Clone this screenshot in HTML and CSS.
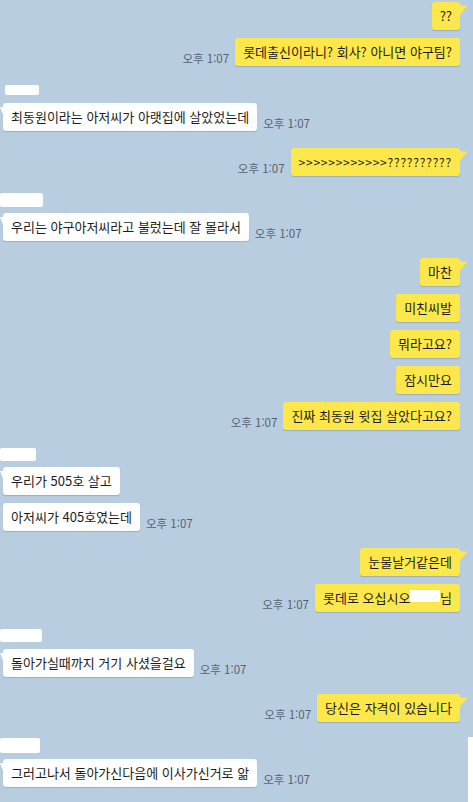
FILE: index.html
```html
<!DOCTYPE html>
<html lang="ko">
<head>
<meta charset="utf-8">
<link rel="stylesheet" href="styles.css">
</head>
<body>
<div class="chat">
  <div class="row me">
    <div class="bubble y tail">??</div>
  </div>
  <div class="row me same">
    <span class="time">오후 1:07</span>
    <div class="bubble y">롯데출신이라니? 회사? 아니면 야구팀?</div>
  </div>

  <div class="name"><span class="blob b1"></span></div>
  <div class="row other">
    <div class="bubble w tail">최동원이라는 아저씨가 아랫집에 살았었는데</div>
    <span class="time">오후 1:07</span>
  </div>

  <div class="row me switch">
    <span class="time">오후 1:07</span>
    <div class="bubble y tail arrows">&gt;&gt;&gt;&gt;&gt;&gt;&gt;&gt;&gt;&gt;&gt;&gt;??????????</div>
  </div>

  <div class="name"><span class="blob b2"></span></div>
  <div class="row other">
    <div class="bubble w tail">우리는 야구아저씨라고 불렀는데 잘 몰라서</div>
    <span class="time">오후 1:07</span>
  </div>

  <div class="row me switch">
    <div class="bubble y tail">마찬</div>
  </div>
  <div class="row me same">
    <div class="bubble y">미친씨발</div>
  </div>
  <div class="row me same">
    <div class="bubble y">뭐라고요?</div>
  </div>
  <div class="row me same">
    <div class="bubble y">잠시만요</div>
  </div>
  <div class="row me same">
    <span class="time">오후 1:07</span>
    <div class="bubble y">진짜 최동원 윗집 살았다고요?</div>
  </div>

  <div class="name"><span class="blob b3"></span></div>
  <div class="row other">
    <div class="bubble w tail">우리가 505호 살고</div>
  </div>
  <div class="row other same">
    <div class="bubble w">아저씨가 405호였는데</div>
    <span class="time">오후 1:07</span>
  </div>

  <div class="row me switch">
    <div class="bubble y tail">눈물날거같은데</div>
  </div>
  <div class="row me same">
    <span class="time">오후 1:07</span>
    <div class="bubble y">롯데로 오십시오 <span class="hidden">　　</span>님</div>
  </div>

  <div class="name"><span class="blob b4"></span></div>
  <div class="row other">
    <div class="bubble w tail">돌아가실때까지 거기 사셨을걸요</div>
    <span class="time">오후 1:07</span>
  </div>

  <div class="row me switch">
    <span class="time">오후 1:07</span>
    <div class="bubble y tail">당신은 자격이 있습니다</div>
  </div>

  <div class="name"><span class="blob b5"></span></div>
  <div class="row other">
    <div class="bubble w tail">그러고나서 돌아가신다음에 이사가신거로 앎</div>
    <span class="time">오후 1:07</span>
  </div>
</div>
<div class="edge"></div>
</body>
</html>
```

FILE: styles.css
```css
html, body {
  margin: 0;
  padding: 0;
}
body {
  background: #b9cde0;
  width: 473px;
  height: 802px;
  overflow: hidden;
  position: relative;
  font-family: "Noto Sans CJK KR", "Noto Sans", sans-serif;
  color: #1c1c1c;
}
.chat {
  display: flex;
  flex-direction: column;
  padding: 2px 13px 0 3px;
}
.row {
  display: flex;
  align-items: flex-end;
  gap: 6px;
}
.row.me {
  justify-content: flex-end;
}
.row.same {
  margin-top: 8px;
}
.row.switch {
  margin-top: 17px;
}
.name {
  margin-top: 17px;
  height: 14px;
  margin-bottom: 6px;
  position: relative;
}
.blob {
  display: block;
  background: #fff;
  height: 11px;
  border-radius: 2px;
  filter: blur(0.6px);
  margin-left: -3px;
}
.b1 { width: 34px; margin-left: 2px; margin-top: 2px; height: 10px; }
.b2 { width: 43px; height: 14px; margin-top: 0; }
.b3 { width: 36px; height: 13px; margin-top: 1px; }
.b4 { width: 42px; height: 13px; margin-top: 0; }
.b5 { width: 40px; height: 15px; margin-top: -1px; }

.bubble {
  position: relative;
  font-size: 13px;
  line-height: 18px;
  padding: 5px 8px;
  border-radius: 3px;
  white-space: nowrap;
  box-shadow: 0 1px 1px rgba(60, 80, 100, 0.25);
}
.bubble.y {
  background: #fde84c;
}
.bubble.w {
  background: #ffffff;
}
.bubble.y.tail::after {
  content: "";
  position: absolute;
  right: -7px;
  top: 3px;
  width: 8px;
  height: 11px;
  background: #fde84c;
  clip-path: polygon(0 0, 100% 8%, 0 100%);
}
.bubble.w.tail::after {
  content: "";
  position: absolute;
  left: -3px;
  top: 4px;
  width: 4px;
  height: 10px;
  background: #ffffff;
  clip-path: polygon(0 0, 100% 0, 100% 100%);
}
.arrows {
  font-size: 12px;
  letter-spacing: 0.75px;
}
.hidden {
  display: inline-block;
  background: #fff;
  width: 30px;
  height: 12px;
  vertical-align: -1px;
  filter: blur(0.5px);
  color: transparent;
  margin-left: -4px;
}
.time {
  font-size: 11.5px;
  line-height: 13px;
  color: #56616e;
  margin-bottom: 1px;
  white-space: nowrap;
}
.edge {
  position: absolute;
  right: 0;
  top: 737px;
  width: 5px;
  height: 65px;
  background: #fff;
}
```
